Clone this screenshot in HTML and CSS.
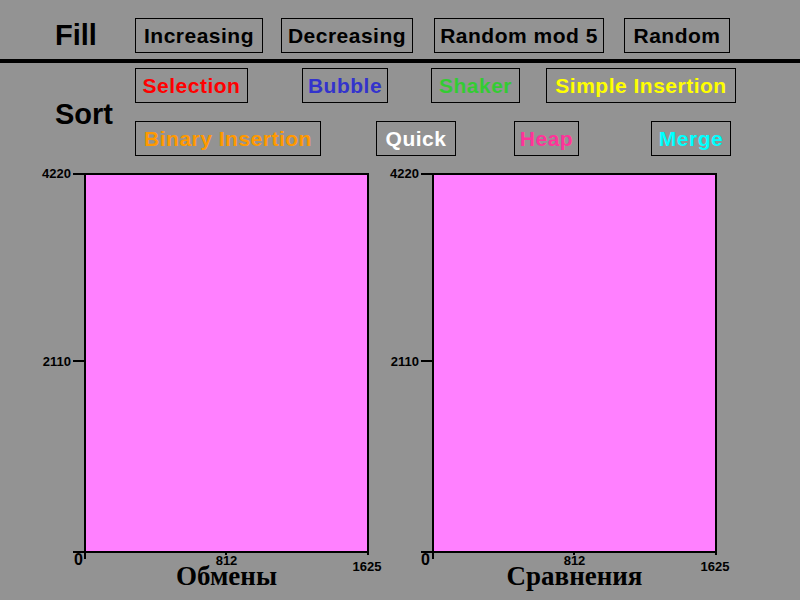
FILE: index.html
```html
<!DOCTYPE html>
<html>
<head>
<meta charset="utf-8">
<title>Sort</title>
<link rel="stylesheet" href="styles.css">
</head>
<body>
<div class="screen">
  <div class="fill-row">
    <div class="label">Fill</div>
    <div class="btn w-inc">Increasing</div>
    <div class="btn w-dec g18">Decreasing</div>
    <div class="btn w-mod g21">Random mod 5</div>
    <div class="btn w-rnd g20">Random</div>
  </div>
  <div class="rule"></div>
  <div class="sort-section">
    <div class="label label-sort">Sort</div>
    <div class="sort-rows">
      <div class="btn-row">
        <div class="btn w-sel c-red">Selection</div>
        <div class="btn w-bub g54 c-blue">Bubble</div>
        <div class="btn w-sha g43 c-green">Shaker</div>
        <div class="btn w-sim g26 c-yellow">Simple Insertion</div>
      </div>
      <div class="btn-row">
        <div class="btn w-bin c-orange">Binary Insertion</div>
        <div class="btn w-qui g55 c-white">Quick</div>
        <div class="btn w-hea g58 c-pink">Heap</div>
        <div class="btn w-mer g72 c-cyan">Merge</div>
      </div>
    </div>
  </div>
  <div class="charts">
    <div class="chart">
      <div class="plot">
        <div class="ytick yt-top"></div>
        <div class="ytick yt-mid"></div>
        <div class="ytick yt-bot"></div>
        <div class="xtick xt-left"></div>
        <div class="xtick xt-mid"></div>
        <div class="xtick xt-right"></div>
        <span class="ylab yl-top">4220</span>
        <span class="ylab yl-mid">2110</span>
        <span class="zero">0</span>
        <span class="xlab xl-mid">812</span>
        <span class="xlab xl-right">1625</span>
      </div>
      <div class="title">Обмены</div>
    </div>
    <div class="chart">
      <div class="plot">
        <div class="ytick yt-top"></div>
        <div class="ytick yt-mid"></div>
        <div class="ytick yt-bot"></div>
        <div class="xtick xt-left"></div>
        <div class="xtick xt-mid"></div>
        <div class="xtick xt-right"></div>
        <span class="ylab yl-top">4220</span>
        <span class="ylab yl-mid">2110</span>
        <span class="zero zero-r">0</span>
        <span class="xlab xl-mid">812</span>
        <span class="xlab xl-right">1625</span>
      </div>
      <div class="title">Сравнения</div>
    </div>
  </div>
</div>
</body>
</html>
```
FILE: styles.css
```css
html, body {
  margin: 0;
  padding: 0;
}
body {
  background: #939393;
  font-family: "Liberation Sans", Arial, sans-serif;
  width: 800px;
  height: 600px;
  overflow: hidden;
}
.screen {
  width: 800px;
  height: 600px;
  padding-top: 18px;
  box-sizing: border-box;
}
.label {
  width: 80px;
  padding-left: 55px;
  flex: none;
  font-weight: bold;
  font-size: 29px;
  color: #000;
}
.label-sort {
  padding-top: 4px;
}
.fill-row {
  display: flex;
  align-items: center;
  height: 35px;
}
.rule {
  height: 4px;
  background: #000;
  margin-top: 6px;
}
.sort-section {
  display: flex;
  align-items: center;
  margin-top: 5px;
}
.sort-rows {
  display: flex;
  flex-direction: column;
  gap: 18px;
}
.btn-row {
  display: flex;
}
.btn {
  flex: none;
  height: 35px;
  box-sizing: border-box;
  border: 1px solid #000;
  display: flex;
  align-items: center;
  justify-content: center;
  font-weight: bold;
  font-size: 21px;
  letter-spacing: 0.5px;
  color: #000;
  white-space: nowrap;
}
.w-inc { width: 128px; }
.w-dec { width: 132px; }
.w-mod { width: 170px; }
.w-rnd { width: 106px; }
.w-sel { width: 113px; }
.w-bub { width: 86px; }
.w-sha { width: 89px; }
.w-sim { width: 190px; }
.w-bin { width: 186px; }
.w-qui { width: 80px; }
.w-hea { width: 65px; }
.w-mer { width: 80px; }
.g18 { margin-left: 18px; }
.g20 { margin-left: 20px; }
.g21 { margin-left: 21px; }
.g26 { margin-left: 26px; }
.g43 { margin-left: 43px; }
.g54 { margin-left: 54px; }
.g55 { margin-left: 55px; }
.g58 { margin-left: 58px; }
.g72 { margin-left: 72px; }
.c-red { color: #ff0000; }
.c-blue { color: #3333cc; }
.c-green { color: #33cc33; }
.c-yellow { color: #ffff00; }
.c-orange { color: #ff9900; }
.c-white { color: #ffffff; }
.c-pink { color: #ff3399; }
.c-cyan { color: #00ffff; }

.charts {
  display: flex;
  gap: 63px;
  padding-left: 84px;
  margin-top: 17px;
}
.chart {
  display: flex;
  flex-direction: column;
  align-items: center;
  width: 285px;
}
.plot {
  position: relative;
  width: 285px;
  height: 380px;
  box-sizing: border-box;
  border: 2px solid #000;
  background: #ff80ff;
}
.ytick {
  position: absolute;
  right: 100%;
  width: 11px;
  height: 2px;
  margin-right: 2px;
  background: #000;
}
.yt-top { top: -2px; }
.yt-mid { top: calc(50% - 3px); }
.yt-bot { bottom: -2px; }
.xtick {
  position: absolute;
  top: 100%;
  width: 2px;
  height: 4px;
  background: #000;
}
.xt-left { left: -2px; height: 8px; }
.xt-mid { left: calc(50% - 2px); }
.xt-right { right: -2px; }
.ylab, .xlab {
  position: absolute;
  font-size: 13px;
  line-height: 13px;
  font-weight: bold;
  color: #000;
  white-space: nowrap;
}
.ylab {
  right: calc(100% + 15px);
}
.yl-top { top: -8px; }
.yl-mid { top: calc(50% - 8px); }
.xl-mid {
  left: 50%;
  transform: translateX(-50%);
  top: calc(100% + 3px);
}
.xl-right {
  left: 100%;
  transform: translateX(-50%);
  top: calc(100% + 9px);
}
.zero {
  position: absolute;
  right: calc(100% + 3px);
  top: calc(100% + 1px);
  font-size: 16px;
  line-height: 16px;
  font-weight: bold;
  color: #000;
}
.zero-r { right: calc(100% + 4px); }
.title {
  margin-top: 10px;
  font-family: "Liberation Serif", "Times New Roman", serif;
  font-weight: bold;
  font-size: 27px;
  line-height: 27px;
  color: #000;
  white-space: nowrap;
}
```
